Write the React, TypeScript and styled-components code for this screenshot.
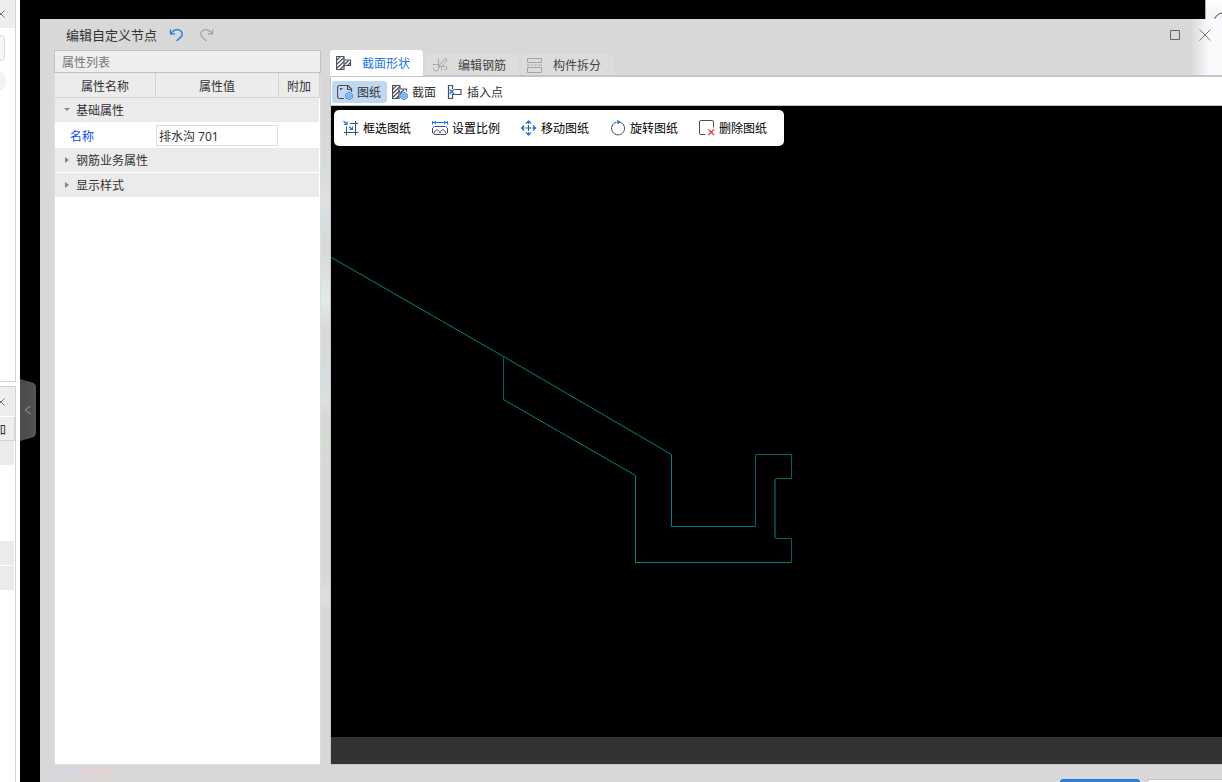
import React, { useState } from 'react';
import styled, { createGlobalStyle } from 'styled-components';

const GlobalStyle = createGlobalStyle`
  *, *::before, *::after { box-sizing: border-box; }
  html, body { margin: 0; padding: 0; height: 100%; overflow: hidden; background: #000; }
  body, button, input, table {
    font-family: "Noto Sans CJK SC", "Noto Sans", sans-serif;
    font-size: 12px;
    line-height: 16px;
    color: #333;
  }
  button { margin: 0; padding: 0; border: 0; background: none; cursor: pointer; white-space: nowrap; }
  svg { display: block; flex: none; }
`;

const Desktop = styled.div`
  display: flex;
  height: 100vh;
  overflow: hidden;
  background: #000;
`;

/* Docked panels of the main window, cut off by the left edge */
const DockStrip = styled.aside`
  flex: 0 0 20px;
  display: flex;
  flex-direction: column;
  gap: 4px;
  overflow: hidden;
  background: #fff;
`;

const DockPanel = styled.section<{ $first?: boolean }>`
  flex: ${(p) => (p.$first ? '0 0 382px' : '1 0 0')};
  width: 16px;
  overflow: hidden;
  border: solid #d4d4d6;
  border-width: ${(p) => (p.$first ? '0 1px 1px 0' : '1px 1px 0 0')};
`;

const DockHeader = styled.header<{ $tall?: boolean }>`
  display: flex;
  align-items: center;
  height: ${(p) => (p.$tall ? 30 : 28)}px;
  background: #eeeef0;
  border-bottom: ${(p) => (p.$tall ? '1px solid #fff' : '0')};
`;

const DockClose = styled.button`
  margin-left: -4px;
`;

const DockField = styled.div`
  width: 25px;
  height: 26px;
  margin: 7px 0 0 -20px;
  border: 1px solid #dcdcdc;
  border-radius: 4px;
  background: #f6f6f6;
`;

const DockRound = styled.div`
  width: 24px;
  height: 24px;
  margin: 8px 0 0 -18px;
  border-radius: 50%;
  background: #f3f3f3;
`;

const DockColumn = styled.div`
  display: flex;
  align-items: center;
  justify-content: flex-end;
  height: 24px;
  padding-right: 8px;
  overflow: hidden;
  background: #eee;
  border-right: 1px solid #d4d4d4;
  border-bottom: 1px solid #d4d4d4;
  white-space: nowrap;
`;

const DockRow = styled.div<{ $gap?: number }>`
  width: 14px;
  height: 24px;
  margin-top: ${(p) => p.$gap ?? 0}px;
  background: #ebebeb;
`;

const Gutter = styled.div`
  flex: 0 0 20px;
  display: flex;
  align-items: flex-start;
  padding-top: 379px;
`;

const Handle = styled.button`
  && {
    display: flex;
    align-items: center;
    justify-content: center;
    width: 16px;
    height: 62px;
    background: linear-gradient(90deg, #4a4a4a, #545454);
    clip-path: polygon(0 0, 14px 4px, 16px 7px, 16px 55px, 14px 58px, 0 62px);
  }
`;

const Stage = styled.div`
  flex: 1;
  min-width: 0;
  display: flex;
  flex-direction: column;
`;

const Backdrop = styled.div`
  flex: 0 0 19px;
  min-height: 0;
  display: flex;
  justify-content: flex-end;
  overflow: hidden;
`;

const BackdropCorner = styled.div`
  display: flex;
  width: 17px;
  overflow: hidden;
  padding: 12px 0 0 7px;
  background: linear-gradient(#fff, #f1f2f5);
  border-left: 1px solid #aaa;
`;

const Dialog = styled.main`
  flex: 1;
  min-height: 0;
  display: flex;
  flex-direction: column;
  padding-left: 14px;
  background:
    linear-gradient(90deg, rgba(248, 250, 252, 0), #f8fafc 60%, #f8fafc) right top / 32px 57px no-repeat,
    radial-gradient(closest-side, #e6d2d2, rgba(230, 210, 210, 0)) 28px 100% / 54px 20px no-repeat,
    radial-gradient(closest-side, #d4d6e4, rgba(212, 214, 228, 0)) 8px 100% / 50px 20px no-repeat,
    #d8d8d8;
`;

const TitleBar = styled.header`
  flex: 0 0 31px;
  display: flex;
  align-items: center;
  padding: 0 10px 0 12px;
`;

const Title = styled.h1`
  margin: 0 12px 0 0;
  font-size: 13px;
  line-height: 20px;
  font-weight: 400;
`;

const TitleButton = styled.button`
  margin-right: 17px;
`;

const WindowButtons = styled.div`
  display: flex;
  gap: 16px;
  margin-left: auto;
`;

const Body = styled.div`
  flex: 1;
  min-height: 0;
  display: flex;
`;

const Properties = styled.section`
  flex: 0 0 267px;
  display: flex;
  flex-direction: column;
  background: #fff;
  border: 1px solid #dedede;
  border-top: 0;
`;

const PropertiesTitle = styled.h2`
  height: 23px;
  margin: 0 -1px;
  padding: 0 7px;
  border: 1px solid #c2c2c2;
  background: #eee;
  color: #777;
  font-size: 12px;
  line-height: 21px;
  font-weight: 400;
`;

const PropertyTable = styled.table`
  width: 100%;
  table-layout: fixed;
  border-collapse: separate;
  border-spacing: 0;
`;

const HeadCell = styled.th<{ $width: number }>`
  width: ${(p) => p.$width}px;
  height: 25px;
  padding: 1px 0 0;
  background: #ececec;
  border: solid #d4d4d4;
  border-width: 0 1px 1px 0;
  font-weight: 400;
`;

const GroupCell = styled.td`
  height: 25px;
  padding: 0;
  background: #ebebeb;
  border: solid #fff;
  border-width: 0 1px 1px 0;
`;

const GroupToggle = styled.button`
  display: flex;
  align-items: center;
  gap: 5px;
  height: 24px;
  padding-left: 8px;
`;

const Cell = styled.td`
  height: 25px;
  padding: 0;
`;

const FieldLabel = styled.label`
  padding-left: 15px;
  color: #0a4bff;
`;

const FieldInput = styled.input`
  display: block;
  width: 122px;
  height: 21px;
  padding: 0 2px;
  border: 1px solid #dedede;
  outline: 0;
  background: #fff;
  font-family: "Noto Sans", "Noto Sans CJK SC", sans-serif;
`;

const Splitter = styled.div`
  flex: 0 0 9px;
  background: linear-gradient(
    #d8d8d8 80px, #d8dcd6 118px, #dfe2df 150px, #d5dfe0 168px, #d8d8d8 200px,
    #e2ebe6 250px, #d8d8d8 280px, #d5dfe0 335px, #e0e0e0 352px, #d8d8d8 365px,
    #d5dbd3 392px, #d8d8d8 425px, #d8d8d8 530px, #e0e0e0 545px, #d8d8d8 560px
  );
`;

const Editor = styled.section`
  flex: 1;
  min-width: 0;
  display: flex;
  flex-direction: column;
`;

const Tabs = styled.nav`
  flex: 0 0 27px;
  display: flex;
  align-items: flex-end;
  gap: 3px;
  border-bottom: 2px solid #c3c7cb;
`;

const Tab = styled.button<{ $active?: boolean }>`
  && {
    display: flex;
    align-items: center;
    gap: 10px;
    width: ${(p) => (p.$active ? 93 : 92)}px;
    height: ${(p) => (p.$active ? 26 : 21)}px;
    margin-bottom: ${(p) => (p.$active ? -1 : 0)}px;
    padding-left: 6px;
    border-radius: 3px 3px 0 0;
    background: ${(p) => (p.$active ? '#fff' : '#dcdcdc')};
    color: ${(p) => (p.$active ? '#1e78e6' : '#444')};
  }
`;

const Work = styled.div`
  flex: 1;
  min-height: 0;
  display: flex;
  flex-direction: column;
  border: solid #c3c7cb;
  border-width: 0 0 1px 1px;
`;

const ToolBar = styled.div`
  flex: 0 0 29px;
  display: flex;
  align-items: center;
  padding: 1px 0 0 1px;
  background: #fff;
  border-bottom: 1px solid #c0c4c2;
`;

const ToolButton = styled.button<{ $active?: boolean }>`
  && {
    display: flex;
    align-items: center;
    gap: 4px;
    height: 22px;
    padding: 0 6px 0 5px;
    border-radius: 3px;
    background: ${(p) => (p.$active ? '#c1d8f0' : 'transparent')};
  }
`;

const Canvas = styled.div`
  flex: 1;
  min-height: 0;
  position: relative;
  padding: 4px 3px;
  overflow: hidden;
  background: #000;
`;

const Drawing = styled.svg`
  position: absolute;
  inset: 0;
  width: 100%;
  height: 100%;
`;

const FloatingBar = styled.div`
  position: relative;
  display: flex;
  align-items: center;
  gap: 21px;
  width: max-content;
  height: 36px;
  padding: 0 17px 0 9px;
  border-radius: 5px;
  background: #fff;
`;

const FloatingButton = styled.button`
  display: flex;
  align-items: center;
  gap: 4px;
  color: #000;
`;

const StatusStrip = styled.div`
  flex: 0 0 27px;
  background: #333;
`;

const Footer = styled.footer`
  flex: 0 0 17px;
  display: flex;
  justify-content: flex-end;
  gap: 7px;
  padding-top: 14px;
  margin-right: -5px;
  overflow: hidden;
`;

const FooterButton = styled.button<{ $primary?: boolean }>`
  && {
    width: 80px;
    height: 26px;
    border: 1px solid ${(p) => (p.$primary ? '#2a72cc' : '#c6c6c6')};
    border-radius: 3px;
    background: ${(p) => (p.$primary ? '#2f80e4' : '#fff')};
  }
`;

const INK = '#4a5060';
const BLUE = '#1e78e6';

const Icon = ({ size = 16, stroke = INK, children }: { size?: number; stroke?: string; children: React.ReactNode }) => (
  <svg width={size} height={size} viewBox={`0 0 ${size} ${size}`} fill="none" stroke={stroke} aria-hidden="true">
    {children}
  </svg>
);

const CrossIcon = ({ size = 12 }: { size?: number }) => (
  <Icon size={size} stroke="#777">
    <path d={`M1.500 1.500L${size - 1.5} ${size - 1.5}M${size - 1.5} 1.500L1.500 ${size - 1.5}`} />
  </Icon>
);

const UndoIcon = () => (
  <Icon size={14} stroke={BLUE}>
    <path strokeWidth="1.3" d="M1.500 1.500V5.900H6.100M1.800 5.600C4 2.600 6.600 1.400 9 1.600C12 1.900 13.600 4.600 13 7C12.600 9 10.500 10.500 7.500 12.800" />
  </Icon>
);

const RedoIcon = () => (
  <Icon size={14} stroke="#a0a0a0">
    <path strokeWidth="1.2" d="M12.500 1.500V5.900H8M12.200 5.600C10 2.600 7.400 1.400 5 1.600C2 1.900 .4 4.600 1 7C1.400 9 3.500 10.500 6.500 12.800" />
  </Icon>
);

const SectionIcon = () => (
  <Icon>
    <path strokeWidth="1.2" d="M8 5V1.500H.5V14.500H8V10.500H14.500V5Z M8 5V10.500" />
    <path strokeWidth="1.2" d="M.5 5.500L4.500 1.500M.5 9.500L8 2.500M.5 13.500L8 6.500M4 14.500L8 10.500M8.500 9.500L12.500 5.500M11.500 10.500L14.500 7.500" />
  </Icon>
);

const RebarIcon = () => (
  <Icon stroke="#a8a8a8">
    <path d="M6.500 1.500V11.500A2.500 2.500 0 0 1 1.500 11.500V10.500M.5 7.500H7M9.500 10.500V13.500M9.500 9.500H13.500A1.500 1.500 0 0 1 13.500 12.500H12" />
    <path d="M7 10.500L8 7.500L13 1.500L15 3.200L10 9.200Z" />
  </Icon>
);

const SplitIcon = () => (
  <Icon stroke="#a4a4a4">
    <path d="M.5 1.500H14.500V5.500H.5ZM.5 10.500H14.500V15.500H.5ZM0 8H3M4.500 8H6.500M8 8H10M11.500 8H15" />
  </Icon>
);

const Gear = () => (
  <g>
    <path d="M12 8.200L15.300 10V14L12 15.800L8.700 14V10Z" fill="#a9cbf5" stroke="#4a90ea" />
    <circle cx="12" cy="12" r="1.400" fill="#e6f0fc" stroke={BLUE} strokeWidth=".8" />
  </g>
);

const SheetIcon = () => (
  <Icon>
    <path strokeWidth="1.2" d="M7 14.500H2.500A2 2 0 0 1 .5 12.500V3.500A2 2 0 0 1 2.500 1.500H11L14.500 5V8M10.500 1.500V5.500H14.500M3.500 6V4.500H5.500" />
    <Gear />
  </Icon>
);

const SectionSettingIcon = () => (
  <Icon>
    <path strokeWidth="1.2" d="M8 5V1.500H.5V14.500H7V5M8 5H14.500V7.500" />
    <path strokeWidth="1.2" d="M.5 5.500L4.500 1.500M.5 9.500L8 2.500M.5 13.500L8 6.500M4 14.500L7 11.500M8 9.500L12 5.500" />
    <Gear />
  </Icon>
);

const InsertIcon = () => (
  <Icon>
    <path strokeWidth="1.2" d="M5.500 5V1.500H1.500V14.500H5.500V10.500H14V5.500H7.500" />
    <path stroke={BLUE} strokeWidth="1.3" d="M2.500 5.500L7 10M7 5.500L2.500 10" />
  </Icon>
);

const SelectSheetIcon = () => (
  <Icon>
    <path d="M3.500 6.500V15.500M7 3.500H15M12.500 1V15.500M1 12.500H15.500" />
    <path stroke={BLUE} strokeWidth="1.2" d="M.5 1L3.500 4M4 1.500V4.500H1M6 6.500L9 9.500M9.500 6.500V9.500H6.500" />
  </Icon>
);

const ScaleIcon = () => (
  <Icon>
    <path stroke={BLUE} d="M.5 1V4.500M15.500 1V4.500M1 2.500H15M4 1L2 2.500L4 4M12 1L14 2.500L12 4" />
    <path d="M2.500 6.500H13.500L15.500 8V13L13.500 14.500H2.500L.5 13V8Z" />
    <path d="M2 13.500C4 8.500 6 9 8 13C10 8.500 12 8.500 14 13.500" />
  </Icon>
);

const MoveIcon = () => (
  <Icon>
    <path d="M7.500 5V11M4.500 8H10.500" />
    <path stroke={BLUE} strokeWidth="1.300" d="M7.500 1V4M5 3.500L7.500 1L10 3.500M7.500 12V15M5 12.500L7.500 15L10 12.500M.5 8H3.500M3 5.500L.5 8L3 10.500M11.500 8H14.500M12 5.500L14.500 8L12 10.500" />
  </Icon>
);

const RotateIcon = () => (
  <Icon>
    <path d="M10 2.200A6.500 6.500 0 1 1 6.500 2.100" />
    <path stroke={BLUE} fill={BLUE} d="M7.500 .5L10 2L8 4Z" />
  </Icon>
);

const DeleteSheetIcon = () => (
  <Icon>
    <path d="M6.500 14.500H2A1.500 1.500 0 0 1 .5 13V2A1.500 1.500 0 0 1 2 .5H13A1.500 1.500 0 0 1 14.500 2V7.500" />
    <path stroke="#e23b3b" strokeWidth="1.3" d="M9.500 9.500L15 15M15 9.500L9.500 15" />
  </Icon>
);

const Triangle = ({ open }: { open?: boolean }) => (
  <svg width="8" height="8" viewBox="0 0 8 8" fill="#888" aria-hidden="true">
    <path d={open ? 'M1 2h6L4 5z' : 'M2 1l4 3-4 3z'} />
  </svg>
);

const tabs = [
  { label: '截面形状', icon: <SectionIcon /> },
  { label: '编辑钢筋', icon: <RebarIcon /> },
  { label: '构件拆分', icon: <SplitIcon /> },
];

const tools = [
  { label: '图纸', icon: <SheetIcon /> },
  { label: '截面', icon: <SectionSettingIcon /> },
  { label: '插入点', icon: <InsertIcon /> },
];

const sheetActions = [
  { label: '框选图纸', icon: <SelectSheetIcon /> },
  { label: '设置比例', icon: <ScaleIcon /> },
  { label: '移动图纸', icon: <MoveIcon /> },
  { label: '旋转图纸', icon: <RotateIcon /> },
  { label: '删除图纸', icon: <DeleteSheetIcon /> },
];

const Group = ({ label, open }: { label: string; open?: boolean }) => (
  <tr>
    <GroupCell colSpan={3}>
      <GroupToggle type="button" aria-expanded={!!open}>
        <Triangle open={open} />
        {label}
      </GroupToggle>
    </GroupCell>
  </tr>
);

const SectionDrawing = () => (
  <Drawing fill="none" aria-label="排水沟">
    <g transform="translate(.5 .5)">
      <path stroke="#008080" d="M0 151L172 250L340 348V420H424M460 456H304V369L172 293" />
      <path stroke="#006464" d="M172 250V293M424 420V348H460V372H444M444 432H460V456" />
    </g>
    <path stroke="#004646" strokeWidth="2" d="M444 373V432" />
  </Drawing>
);

export default function App() {
  const [name, setName] = useState('排水沟 701');
  const [tab, setTab] = useState(0);
  const [tool, setTool] = useState(0);

  return (
    <>
      <GlobalStyle />
      <Desktop>
        <DockStrip>
          <DockPanel $first>
            <DockHeader>
              <DockClose type="button" aria-label="关闭"><CrossIcon size={10} /></DockClose>
            </DockHeader>
            <DockField />
            <DockRound />
          </DockPanel>
          <DockPanel>
            <DockHeader $tall>
              <DockClose type="button" aria-label="关闭"><CrossIcon size={10} /></DockClose>
            </DockHeader>
            <DockColumn>加</DockColumn>
            <DockRow />
            <DockRow $gap={76} />
            <DockRow $gap={1} />
          </DockPanel>
        </DockStrip>
        <Gutter>
          <Handle type="button" aria-label="收起">
            <Icon size={10} stroke="#999"><path d="M7.500 1L2 5L7.500 9" /></Icon>
          </Handle>
        </Gutter>
        <Stage>
          <Backdrop>
            <BackdropCorner>
              <Icon size={20}><circle cx="10" cy="10" r="9" /></Icon>
            </BackdropCorner>
          </Backdrop>
          <Dialog>
            <TitleBar>
              <Title>编辑自定义节点</Title>
              <TitleButton type="button" aria-label="撤销"><UndoIcon /></TitleButton>
              <TitleButton type="button" aria-label="重做"><RedoIcon /></TitleButton>
              <WindowButtons>
                <button type="button" aria-label="最大化">
                  <Icon size={14} stroke="#666"><path d="M2.500 2.500h9v9h-9z" /></Icon>
                </button>
                <button type="button" aria-label="关闭"><CrossIcon size={14} /></button>
              </WindowButtons>
            </TitleBar>
            <Body>
              <Properties>
                <PropertiesTitle>属性列表</PropertiesTitle>
                <PropertyTable>
                  <thead>
                    <tr>
                      <HeadCell $width={101}>属性名称</HeadCell>
                      <HeadCell $width={123}>属性值</HeadCell>
                      <HeadCell $width={41}>附加</HeadCell>
                    </tr>
                  </thead>
                  <tbody>
                    <Group label="基础属性" open />
                    <tr>
                      <Cell><FieldLabel htmlFor="node-name">名称</FieldLabel></Cell>
                      <Cell>
                        <FieldInput id="node-name" value={name} onChange={(e) => setName(e.target.value)} />
                      </Cell>
                      <Cell />
                    </tr>
                    <Group label="钢筋业务属性" />
                    <Group label="显示样式" />
                  </tbody>
                </PropertyTable>
              </Properties>
              <Splitter />
              <Editor>
                <Tabs>
                  {tabs.map((t, i) => (
                    <Tab key={t.label} type="button" $active={i === tab} onClick={() => setTab(i)}>
                      {t.icon}
                      {t.label}
                    </Tab>
                  ))}
                </Tabs>
                <Work>
                  <ToolBar>
                    {tools.map((t, i) => (
                      <ToolButton key={t.label} type="button" $active={i === tool} onClick={() => setTool(i)}>
                        {t.icon}
                        {t.label}
                      </ToolButton>
                    ))}
                  </ToolBar>
                  <Canvas>
                    <SectionDrawing />
                    <FloatingBar>
                      {sheetActions.map((a) => (
                        <FloatingButton key={a.label} type="button">
                          {a.icon}
                          {a.label}
                        </FloatingButton>
                      ))}
                    </FloatingBar>
                  </Canvas>
                  <StatusStrip />
                </Work>
              </Editor>
            </Body>
            <Footer>
              <FooterButton type="button" $primary aria-label="确定" />
              <FooterButton type="button" aria-label="取消" />
            </Footer>
          </Dialog>
        </Stage>
      </Desktop>
    </>
  );
}
